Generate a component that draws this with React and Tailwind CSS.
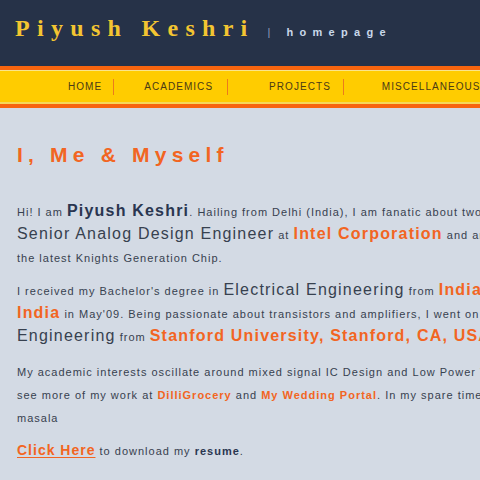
import React from 'react';

const navItems = [
  { label: 'HOME', gapBefore: 'ml-[68px]', sepGap: 'ml-[11px]' },
  { label: 'ACADEMICS', gapBefore: 'ml-[30px]', sepGap: 'ml-[14px]' },
  { label: 'PROJECTS', gapBefore: 'ml-[41px]', sepGap: 'ml-[12px]' },
  { label: 'MISCELLANEOUS', gapBefore: 'ml-[38px]', sepGap: 'ml-[12px]' },
];

function Big({ children, className = '' }) {
  return <span className={`text-[16px] leading-none tracking-[1.2px] ${className}`}>{children}</span>;
}

function Orange({ children, big = false }) {
  return (
    <span className={`font-bold text-[#f26522] ${big ? 'text-[16px] leading-none tracking-[1.2px]' : ''}`}>{children}</span>
  );
}

export default function App() {
  return (
    <div className="min-h-screen w-full overflow-hidden bg-[#d3dae4] font-['Liberation_Sans',Arial,sans-serif]">
      {/* header */}
      <header className="h-[66px] bg-[#263248] pl-[15px] pt-[16px] whitespace-nowrap">
        <div className="flex items-baseline">
          <h1 className="font-['Liberation_Serif','Times_New_Roman',serif] text-[24px] leading-none font-bold tracking-[7.3px] text-[#f3c531]">
            Piyush Keshri
          </h1>
          <span className="ml-[13px] text-[11px] text-[#8d9dbd]">|</span>
          <span className="ml-[16px] text-[11px] font-bold tracking-[6.3px] text-[#c9d8ea]">homepage</span>
        </div>
      </header>

      {/* nav bar */}
      <div className="h-[4px] bg-[#f7650f]" />
      <div className="h-[1px] bg-[#fbe58a]" />
      <nav className="flex h-[31px] items-center bg-[#ffcc00] whitespace-nowrap">
        {navItems.map((item, i) => (
          <div key={item.label} className="flex items-center">
            <a className={`${item.gapBefore} text-[10px] tracking-[1.05px] text-[#4a3a16]`}>{item.label}</a>
            {i < navItems.length - 1 && <span className={`${item.sepGap} h-[16px] w-[1px] bg-[#ec7a1c]`} />}
          </div>
        ))}
      </nav>
      <div className="h-[2px] bg-[#f6d85a]" />
      <div className="h-[4px] bg-[#f7650f]" />

      {/* content */}
      <main className="pl-[17px] whitespace-nowrap text-[11px] leading-[23px] tracking-[1px] text-[#37414f]">
        <h2 className="mt-[36px] text-[21px] leading-none font-bold tracking-[5.2px] text-[#f26522]">I, Me &amp; Myself</h2>

        <p className="mt-[36px]">
          Hi! I am <Big className="font-bold text-[#2a3650]">Piyush Keshri</Big>. Hailing from Delhi (India), I am fanatic about two things - analog circuits and good food. I work as a
          <br />
          <Big>Senior Analog Design Engineer</Big> at <Orange big>Intel Corporation</Orange> and am a part of the team designing
          <br />
          the latest Knights Generation Chip.
        </p>

        <p className="mt-[10px]">
          I received my Bachelor's degree in <Big>Electrical Engineering</Big> from <Orange big>Indian Institute of Technology, Delhi,</Orange>
          <br />
          <Orange big>India</Orange> in May'09. Being passionate about transistors and amplifiers, I went on to do my Master's in <Big>Electrical</Big>
          <br />
          <Big>Engineering</Big> from <Orange big>Stanford University, Stanford, CA, USA</Orange>.
        </p>

        <p className="mt-[12px]">
          My academic interests oscillate around mixed signal IC Design and Low Power VLSI. Apart from circuits, you can
          <br />
          see more of my work at <Orange>DilliGrocery</Orange> and <Orange>My Wedding Portal</Orange>. In my spare time I love cooking and experimenting with
          <br />
          masala
        </p>

        <p className="mt-[10px]">
          <a className="text-[14px] leading-none font-bold text-[#f26522] underline underline-offset-2">Click Here</a> to download my{' '}
          <span className="font-bold text-[#2a3650]">resume</span>.
        </p>
      </main>
    </div>
  );
}
